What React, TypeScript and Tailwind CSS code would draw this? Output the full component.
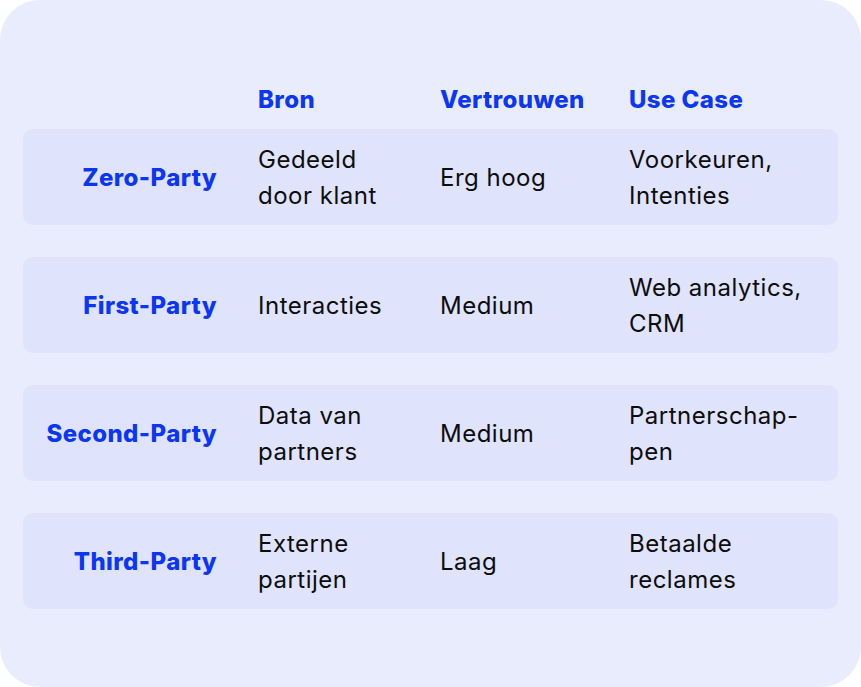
import React from "react";

const rows: { label: string; bron: React.ReactNode; vert: string; use: React.ReactNode }[] = [
  { label: "Zero-Party", bron: <>Gedeeld<br />door klant</>, vert: "Erg hoog", use: <>Voorkeuren,<br />Intenties</> },
  { label: "First-Party", bron: <>Interacties</>, vert: "Medium", use: <>Web analytics,<br />CRM</> },
  { label: "Second-Party", bron: <>Data van<br />partners</>, vert: "Medium", use: <>Partnerschap-<br />pen</> },
  { label: "Third-Party", bron: <>Externe<br />partijen</>, vert: "Laag", use: <>Betaalde<br />reclames</> },
];

export default function App() {
  return (
    <div className="w-[861px] h-[687px] bg-white" style={{ fontFamily: "Inter, 'Open Sans', sans-serif" }}>
      <div className="w-full h-full rounded-[40px] bg-[#e9ecfd] px-[23px] pt-[82px]">
        <div className="grid grid-cols-[235px_182px_189px_1fr] h-[36px] mb-[11px] text-[24px] leading-[36px] font-extrabold tracking-[0.4px] text-[#0b36f4]">
          <div />
          <div>Bron</div>
          <div>Vertrouwen</div>
          <div>Use Case</div>
        </div>
        <div className="flex flex-col gap-[32px]">
          {rows.map((r) => (
            <div key={r.label} className="grid grid-cols-[235px_182px_189px_1fr] items-center h-[96px] pt-[2px] rounded-[10px] bg-[#dfe3fc] text-[24px] leading-[36px] tracking-[0.5px] text-[#0d0d0d]">
              <div className="text-right pr-[41px] font-extrabold tracking-[0.4px] text-[#0b36f4]">{r.label}</div>
              <div>{r.bron}</div>
              <div>{r.vert}</div>
              <div>{r.use}</div>
            </div>
          ))}
        </div>
      </div>
    </div>
  );
}
